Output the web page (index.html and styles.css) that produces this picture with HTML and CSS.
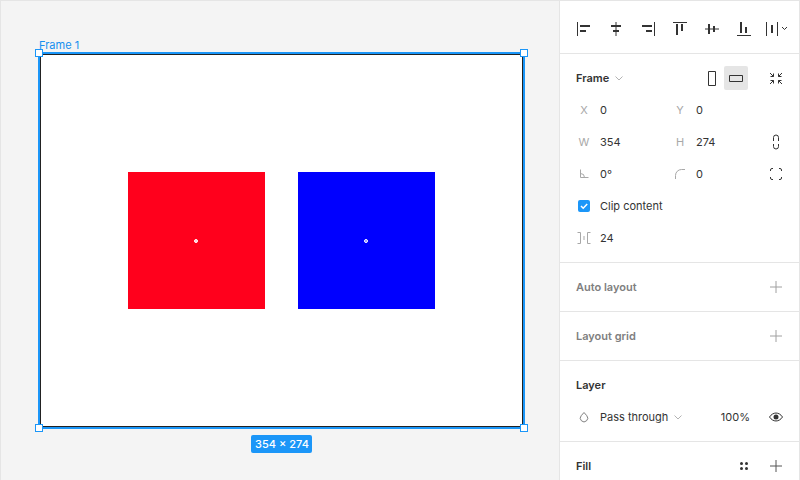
FILE: index.html
```html
<!DOCTYPE html>
<html lang="en">
<head>
  <meta charset="UTF-8">
  <title>Frame 1</title>
  <link rel="stylesheet" href="styles.css">
</head>
<body>
  <div class="app">
    <main class="canvas">
      <span class="frame-name">Frame 1</span>
      <div class="frame">
        <div class="square red"><i class="dot"></i></div>
        <div class="square blue"><i class="dot"></i></div>
      </div>
      <i class="handle tl"></i>
      <i class="handle tr"></i>
      <i class="handle bl"></i>
      <i class="handle br"></i>
      <span class="size-badge">354 × 274</span>
    </main>

    <aside class="panel">
      <div class="align-bar">
        <svg class="icon" viewBox="0 0 32 32"><path class="ln" d="M9.500 9v14"/><path class="bar" d="M12 12h10v2H12zM12 17h6v2h-6z"/></svg>
        <svg class="icon" viewBox="0 0 32 32"><path class="ln" d="M16 9v14"/><path class="bar" d="M11 12h10v2H11zM13 17h6v2h-6z"/></svg>
        <svg class="icon" viewBox="0 0 32 32"><path class="ln" d="M22.500 9v14"/><path class="bar" d="M10 12h10v2H10zM14 17h6v2h-6z"/></svg>
        <svg class="icon" viewBox="0 0 32 32"><path class="ln" d="M9 9.500h14"/><path class="bar" d="M12 11h2v11h-2zM17 11h2v7h-2z"/></svg>
        <svg class="icon" viewBox="0 0 32 32"><path class="ln" d="M9 16h14"/><path class="bar" d="M12 11h2v10h-2zM17 13h2v6h-2z"/></svg>
        <svg class="icon" viewBox="0 0 32 32"><path class="ln" d="M9 22.500h14"/><path class="bar" d="M12 9h2v11h-2zM17 14h2v6h-2z"/></svg>
        <svg class="icon" viewBox="0 0 32 32"><path class="ln" d="M6.500 9v14M17.500 9v14"/><path class="bar" d="M11 12h2v8h-2z"/><path class="ln" d="M22 14l2.500 2.500L27 14"/></svg>
      </div>

      <section class="group">
        <div class="group-head">
          <span class="title">Frame</span>
          <svg class="chev" viewBox="0 0 8 5"><path d="M.5.500 4 4 7.500.500"/></svg>
          <span class="spacer"></span>
          <span class="tool">
            <svg class="tool-icon" viewBox="0 0 24 24"><path class="ln" d="M8.500 5.500h7v14h-7z"/></svg>
          </span>
          <span class="tool on">
            <svg class="tool-icon" viewBox="0 0 24 24"><path class="ln" d="M5.500 9.500h13v6h-13z"/></svg>
          </span>
          <span class="tool resize">
            <svg class="tool-icon" viewBox="0 0 24 24"><path class="ln" d="M6 7l3.500 3.500M9.500 7.500v3h-3M18 7l-3.500 3.500M14.500 7.500v3h3M6 18l3.500-3.500M9.500 17.500v-3h-3M18 18l-3.500-3.500M14.500 17.500v-3h3"/></svg>
          </span>
        </div>

        <div class="row">
          <span class="lbl">X</span><span class="val">0</span>
          <span class="lbl">Y</span><span class="val">0</span>
        </div>
        <div class="row">
          <span class="lbl">W</span><span class="val">354</span>
          <span class="lbl">H</span><span class="val">274</span>
          <svg class="icon" viewBox="0 0 32 32"><path class="ln" d="M13.500 15v-3.500a2.500 2.500 0 0 1 5 0V15M13.500 18v2.500a2.500 2.500 0 0 0 5 0V18"/></svg>
        </div>
        <div class="row">
          <svg class="icon" viewBox="0 0 32 32"><path class="ln mute" d="M12.500 11.500v8h8M12.500 15.500a4 4 0 0 1 4 4"/></svg>
          <span class="val">0°</span>
          <svg class="icon" viewBox="0 0 32 32"><path class="ln mute" d="M11.500 21v-3.500a6 6 0 0 1 6-6H21"/></svg>
          <span class="val">0</span>
          <svg class="icon" viewBox="0 0 32 32"><path class="ln" d="M10.500 13v-1a1.500 1.500 0 0 1 1.500-1.500h1M19 10.500h1a1.500 1.500 0 0 1 1.500 1.500v1M21.500 19v1a1.500 1.500 0 0 1-1.500 1.500h-1M13 21.500h-1a1.500 1.500 0 0 1-1.500-1.500v-1"/></svg>
        </div>
        <div class="row">
          <span class="check">
            <svg viewBox="0 0 12 12"><path d="M3 6l2.200 2.200L9.200 4"/></svg>
          </span>
          <span class="val wide">Clip content</span>
        </div>
        <div class="row">
          <svg class="icon" viewBox="0 0 32 32"><path class="ln mute" d="M9.500 10.500h3v11h-3M22.500 10.500h-3v11h3M16 14v4"/></svg>
          <span class="val">24</span>
        </div>
      </section>

      <section class="group short">
        <span class="title dim">Auto layout</span>
        <svg class="plus" viewBox="0 0 12 12"><path d="M6 0v12M0 6h12"/></svg>
      </section>
      <section class="group short">
        <span class="title dim">Layout grid</span>
        <svg class="plus" viewBox="0 0 12 12"><path d="M6 0v12M0 6h12"/></svg>
      </section>

      <section class="group">
        <div class="group-head"><span class="title">Layer</span></div>
        <div class="row">
          <svg class="icon" viewBox="0 0 32 32"><path class="ln drop" d="M16 11.500l2.800 3.200a3.700 3.700 0 1 1-5.600 0z"/></svg>
          <span class="val wide blend">Pass through
            <svg class="chev" viewBox="0 0 8 5"><path d="M.5.500 4 4 7.500.500"/></svg>
          </span>
          <span class="val pct">100%</span>
          <svg class="icon" viewBox="0 0 32 32"><path class="ln" d="M9.500 16c3.500-5.300 9.500-5.300 13 0-3.500 5.300-9.500 5.300-13 0z"/><circle class="fill" cx="16" cy="16" r="2.500"/></svg>
        </div>
      </section>

      <section class="group">
        <div class="group-head">
          <span class="title">Fill</span>
          <span class="spacer"></span>
          <svg class="dots" viewBox="0 0 8 8"><circle cx="1.500" cy="1.500" r="1.500"/><circle cx="6.500" cy="1.500" r="1.500"/><circle cx="1.500" cy="6.500" r="1.500"/><circle cx="6.500" cy="6.500" r="1.500"/></svg>
          <svg class="plus dark" viewBox="0 0 12 12"><path d="M6 0v12M0 6h12"/></svg>
        </div>
      </section>
    </aside>
  </div>
</body>
</html>
```

FILE: styles.css
```css
* {
  box-sizing: border-box;
}
html, body {
  margin: 0;
  height: 100%;
  overflow: hidden;
}
body {
  font-family: Inter, "Liberation Sans", sans-serif;
  font-size: 11px;
  color: #333;
}
.app {
  display: flex;
  width: 800px;
  height: 480px;
  border: 1px solid #e5e5e5;
  border-bottom: 0;
  overflow: hidden;
}

/* canvas: things here sit on a free canvas */
.canvas {
  position: relative;
  width: 558px;
  flex: none;
  background: #f4f4f4;
}
.frame-name {
  position: absolute;
  left: 38px;
  top: 38px;
  line-height: 13px;
  color: #158fef;
}
.frame {
  position: absolute;
  left: 37px;
  top: 51px;
  width: 487px;
  height: 377px;
  display: flex;
  align-items: center;
  justify-content: center;
  gap: 33px;
  background: #fff;
  border: 2px solid #1b96f8;
  box-shadow: inset 0 0 0 1px #222;
}
.square {
  width: 137px;
  height: 137px;
  display: flex;
  align-items: center;
  justify-content: center;
}
.red {
  background: #ff001c;
}
.blue {
  background: #0000ff;
}
.dot {
  width: 4px;
  height: 4px;
  margin-right: 1px;
  border-radius: 50%;
  border: 1px solid #fff;
  background: #ffc0d0;
}
.blue .dot {
  background: #8080ff;
}
.handle {
  position: absolute;
  width: 8px;
  height: 8px;
  background: #fff;
  border: 1px solid #1b96f8;
}
.tl { left: 34px; top: 48px; }
.tr { left: 519px; top: 48px; }
.bl { left: 34px; top: 423px; }
.br { left: 519px; top: 423px; }
.size-badge {
  position: absolute;
  left: 250px;
  top: 434px;
  width: 61px;
  height: 18px;
  padding-left: 1px;
  line-height: 18px;
  text-align: center;
  font-weight: 500;
  color: #fff;
  background: #1b96f8;
  border-radius: 2px;
}

/* right panel */
.panel {
  flex: 1;
  background: #fff;
  border-left: 1px solid #e5e5e5;
}
.align-bar {
  display: flex;
  height: 53px;
  padding: 4px 0 0 8px;
  align-items: center;
  border-bottom: 1px solid #e5e5e5;
}
.icon {
  width: 32px;
  height: 32px;
  flex: none;
}
.ln {
  fill: none;
  stroke: #333;
  stroke-width: 1;
}
.ln.mute {
  stroke: #a8a8a8;
}
.ln.drop {
  stroke: #808080;
}
.bar, .fill {
  fill: #333;
}
.group {
  padding: 8px 0;
  border-bottom: 1px solid #e5e5e5;
}
.group-head {
  display: flex;
  align-items: center;
  height: 32px;
  padding-left: 16px;
}
.title {
  font-weight: 600;
}
.title.dim {
  color: #808080;
}
.spacer {
  flex: 1;
}
.chev {
  width: 8px;
  height: 5px;
  margin-left: 6px;
  fill: none;
  stroke: #b3b3b3;
}
.tool {
  width: 24px;
  height: 24px;
  border-radius: 2px;
}
.tool.on {
  background: #e5e5e5;
}
.tool.resize {
  margin: 0 11px 0 16px;
}
.tool-icon {
  display: block;
  width: 24px;
  height: 24px;
}
.row {
  display: grid;
  grid-template-columns: 32px 64px 32px 64px 32px;
  align-items: center;
  height: 32px;
  padding-left: 8px;
}
.lbl {
  text-align: center;
  color: #a8a8a8;
}
.val.wide {
  grid-column: span 2;
}
.blend {
  display: flex;
  align-items: center;
}
.pct {
  text-align: right;
  padding-right: 10px;
}
.check {
  justify-self: center;
  width: 12px;
  height: 12px;
  border-radius: 2px;
  background: #1b96f8;
}
.check svg {
  display: block;
  fill: none;
  stroke: #fff;
  stroke-width: 1.5;
}
.short {
  display: flex;
  align-items: center;
  justify-content: space-between;
  height: 49px;
  padding: 0 17px 0 16px;
}
.plus {
  width: 12px;
  height: 12px;
  fill: none;
  stroke: #a0a0a0;
}
.plus.dark {
  stroke: #555;
  margin-right: 17px;
}
.dots {
  width: 8px;
  height: 8px;
  margin-right: 22px;
  fill: #333;
}
```
